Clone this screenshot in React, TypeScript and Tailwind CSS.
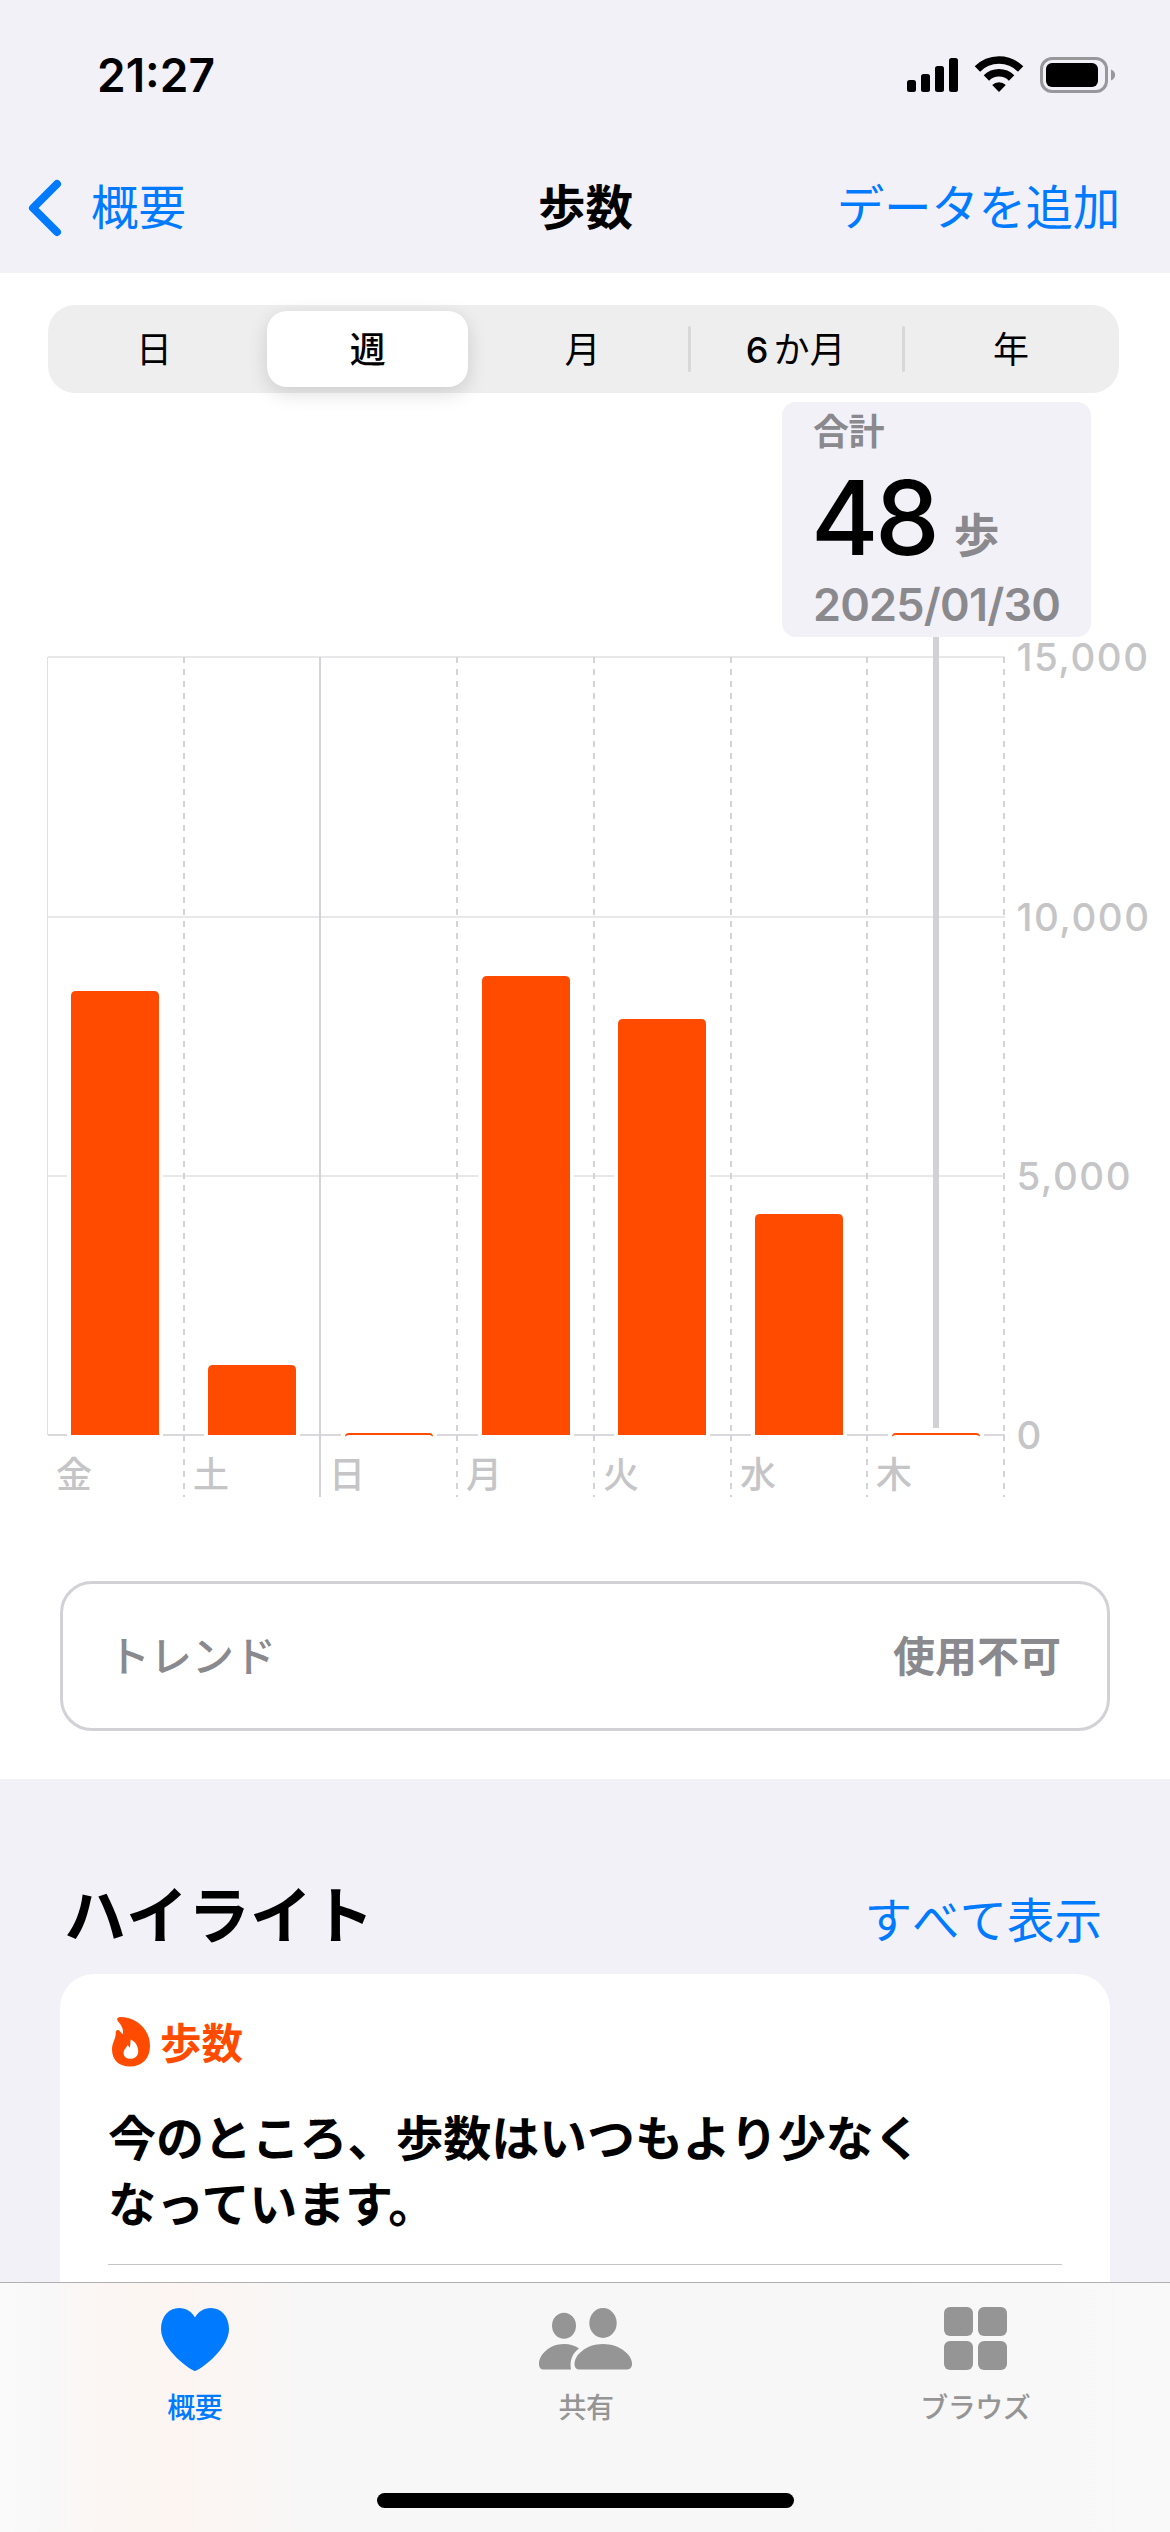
const ranges = ["日", "週", "月", "6か月", "年"];

const days = [
  { label: "金", lineX: 47, barX: 71, top: 598 },
  { label: "土", lineX: 184, barX: 208, top: 972 },
  { label: "日", lineX: 320, barX: 345, top: 1040 },
  { label: "月", lineX: 457, barX: 482, top: 583 },
  { label: "火", lineX: 594, barX: 618, top: 626 },
  { label: "水", lineX: 731, barX: 755, top: 821 },
  { label: "木", lineX: 867, barX: 892, top: 1040 },
];

const dashedLines = [184, 457, 594, 731, 867, 1004];

const yAxis = [
  { label: "15,000", y: 264 },
  { label: "10,000", y: 524 },
  { label: "5,000", y: 783 },
  { label: "0", y: 1042 },
];

const BASE_Y = 1042;

function StatusBar() {
  return (
    <div className="flex h-[149px] items-center justify-between pl-[97px] pr-[54px]">
      <span className="text-[46px] font-semibold leading-none">21:27</span>
      <svg width="209" height="38" viewBox="0 0 209 38" className="mt-px" aria-hidden="true">
        <rect x="0" y="24" width="9" height="12" rx="2.5" />
        <rect x="14" y="18" width="9" height="18" rx="2.5" />
        <rect x="28" y="10" width="9" height="26" rx="2.5" />
        <rect x="42" y="2" width="9" height="34" rx="2.5" />
        <g fill="none" stroke="#000" strokeWidth="7.6">
          <path d="M70.4 13 A30.5 30.5 0 0 1 113.6 13" />
          <path d="M79.4 22 A17.8 17.8 0 0 1 104.6 22" />
        </g>
        <path d="M92 36 L85.2 29 A9.7 9.7 0 0 1 98.8 29 Z" />
        <rect x="134.5" y="2.5" width="65" height="33" rx="10.5" fill="none" stroke="#98979b" strokeWidth="3" />
        <rect x="139" y="7" width="52" height="24" rx="6" />
        <path d="M204 13.5 C209.5 15.5 209.5 22.5 204 24.5 Z" fill="#98979b" />
      </svg>
    </div>
  );
}

function NavBar() {
  return (
    <div className="grid h-[116px] grid-cols-3 items-center pl-7 pr-[50px] pt-px text-[47.5px] leading-none text-[#007aff]">
      <div className="flex items-center">
        <svg width="34" height="58" viewBox="0 0 34 58" fill="none" className="mr-[29px]" aria-hidden="true">
          <path d="M29 5 L5 29 L29 53" stroke="#007aff" strokeWidth="8" strokeLinecap="round" strokeLinejoin="round" />
        </svg>
        <span>概要</span>
      </div>
      <h1 className="pl-[23px] text-center font-bold text-black">歩数</h1>
      <span className="whitespace-nowrap text-right tracking-[-0.3px]">データを追加</span>
    </div>
  );
}

function RangeControl() {
  return (
    <div className="ml-12 mr-[51px] flex h-[88px] rounded-[27px] bg-[#eeeeee] text-[36px] leading-none">
      {ranges.map((range, i) => (
        <div
          key={range}
          className={
            i > 2
              ? "relative flex flex-1 items-center justify-center before:absolute before:left-[-3px] before:top-[21px] before:h-[46px] before:w-[3px] before:rounded-full before:bg-[#d8d8da]"
              : "flex flex-1 items-center justify-center"
          }
        >
          {i === 1 ? (
            <span className="mr-[3px] flex h-[76px] w-[201px] items-center justify-center rounded-[20px] bg-white pt-[2px] font-medium shadow-[0_6px_20px_rgba(0,0,0,0.14)]">
              {range}
            </span>
          ) : range === "6か月" ? (
            <span className="mr-1 flex items-center gap-[5px] pt-[2px]">
              <span className="font-medium">6</span>
              <span>か月</span>
            </span>
          ) : (
            <span className="mr-[2px] pt-[2px]">{range}</span>
          )}
        </div>
      ))}
    </div>
  );
}

function StepsChart() {
  return (
    <div className="relative h-[1188px]">
      <svg width="1170" height="1188" viewBox="0 0 1170 1188" role="img" aria-label="歩数">
        {yAxis.map(({ label, y }) => (
          <g key={label}>
            <rect x="48" y={y - 1} width="957" height="2" fill={y === BASE_Y ? "#d9d9dd" : "#e8e8ea"} />
            <text x="1016.5" y={y + 14} fontSize="38.5" fontWeight="500" letterSpacing="1.5" fill="#c5c5c7">
              {label}
            </text>
          </g>
        ))}
        <rect x="47" y="264" width="1" height="778" fill="#e0e0e3" />
        {/* The week starts on the solid line */}
        <line x1="320" x2="320" y1="264" y2="1104" stroke="#d3d3d8" strokeWidth="2" />
        {dashedLines.map((x) => (
          <path
            key={x}
            d={`M${x} 264 V${BASE_Y} M${x} ${BASE_Y} V1104`}
            stroke="#d3d3d8"
            strokeWidth="2"
            strokeDasharray="6 6"
          />
        ))}
        {days.map(({ label, lineX, barX, top }) => (
          <g key={label}>
            <rect x={barX - 4} y={top - 3} width="96" height={BASE_Y + 4 - top} fill="#fff" />
            {BASE_Y - top > 4 ? (
              <path d={`M${barX} ${BASE_Y} V${top + 5} q0 -5 5 -5 h78 q5 0 5 5 V${BASE_Y} Z`} fill="#ff4b00" />
            ) : (
              <path d={`M${barX} ${top + 3.5} q0 -3.5 4 -3.5 h80 q4 0 4 3.5 l-3 -1.5 h-82 Z`} fill="#ff4b00" />
            )}
            <text x={lineX + 9} y="1095" fontSize="36" fontWeight="500" fill="#c5c5c7">
              {label}
            </text>
          </g>
        ))}
        <rect x="933" y="244" width="6" height="791" fill="#d1d1d6" />
      </svg>

      {/* Selected day */}
      <div className="absolute left-[782px] top-[9px] h-[235px] w-[309px] rounded-[14px] bg-[#f2f1f7] pl-[31px] text-[#8a898e]">
        <p className="pt-3 text-[36px] font-bold leading-[36px] tracking-[-0.5px]">合計</p>
        <div className="-ml-[2px] mt-[9px] flex h-[116px] items-center">
          <span className="text-[103px] font-medium leading-none tracking-[-3.5px] text-black">48</span>
          <span className="ml-[17px] mt-[36px] text-[46px] font-bold leading-none">歩</span>
        </div>
        <p className="mt-[7px] text-[45px] font-semibold leading-[46px] tracking-[-0.8px]">2025/01/30</p>
      </div>
    </div>
  );
}

function TrendRow() {
  return (
    <div className="mx-[60px] flex h-[150px] items-center justify-between rounded-[32px] border-[3px] border-[#d1d1d6] pl-[45px] pr-[46px] pt-[2px] text-[42px] leading-none text-[#8a898e]">
      <span className="font-medium">トレンド</span>
      <span className="font-bold">使用不可</span>
    </div>
  );
}

function Highlights() {
  return (
    <section className="h-[503px] overflow-hidden px-[60px]">
      <div className="flex h-[195px] items-end justify-between pl-1 pr-[8px] [font-kerning:none]">
        <h2 className="mb-[17px] text-[62px] font-bold leading-[80px]">ハイライト</h2>
        <span className="mb-[23px] text-[47.5px] leading-[60px] text-[#007aff]">すべて表示</span>
      </div>
      <div className="h-[400px] rounded-[34px] bg-white px-12 pt-[38px]">
        <div className="flex h-[60px] items-center pl-1 text-[#ff4b00]">
          <svg width="38" height="50" viewBox="0 0 38 50" fill="currentColor" className="mr-[10px]" aria-hidden="true">
            <path
              fillRule="evenodd"
              d="M5.2 1.8 C5.8 0.4 7.5 0 9.8 0 C25 1 38 12.5 38 29 C38 41.5 30 49.5 18 49.5 C7 49.5 0 43 0 32.5 C0 25.5 4.2 22 3.7 15.5 C3.6 13.2 5.6 12.3 7 13.3 C8 14 8.5 15.5 10.8 17.2 C11.6 13 10.5 9 5.8 4 C5.2 3.3 5 2.5 5.2 1.8 Z M18.7 22.4 C18.2 25 18.9 27.5 17.3 31 C17 29.5 16.5 28.5 15.3 28 C14.8 31 11.6 32 11.6 36 C11.6 39.8 14.5 41.8 18.5 41.8 C23 41.8 26.2 39 26.2 34.5 C26.2 29 23.5 24.5 18.7 22.4 Z"
            />
          </svg>
          <span className="mt-[6px] text-[41.5px] font-bold leading-none">歩数</span>
        </div>
        <p className="mt-[34px] text-[48px] font-bold leading-[66px] tracking-[-0.1px]">
          今のところ、歩数はいつもより少なく
          <br />
          なっています。
        </p>
        <div className="mt-[26px] h-px bg-[#c6c6c8]" />
      </div>
    </section>
  );
}

function HeartIcon() {
  return (
    <svg width="68" height="64" viewBox="0 0 68 64" fill="currentColor" aria-hidden="true">
      <path d="M34 64 C31 64 0 43 0 22 C0 9.5 8 1 18 1 C25.5 1 31 5 34 10.5 C37 5 42.5 1 50 1 C60 1 68 9.5 68 22 C68 43 37 64 34 64 Z" />
    </svg>
  );
}

function PeopleIcon() {
  return (
    <svg width="93" height="64" viewBox="0 -1 93 64" fill="currentColor" aria-hidden="true">
      <ellipse cx="25" cy="17.7" rx="12" ry="13" />
      <ellipse cx="64" cy="15" rx="13.7" ry="15" />
      <path d="M5 61.5 C1.5 61.5 0 59.5 0 56 C0 47 10 36 25 36 C31 36 36 37.5 40 40.5 C33 45.5 30.5 53 32 61.5 Z" />
      <path d="M41 61.5 C37 61.5 35.5 59.5 35.5 56 C35.5 47 47 36 64 36 C81 36 93 47 93 56 C93 59.5 91 61.5 87 61.5 Z" />
    </svg>
  );
}

function GridIcon() {
  return (
    <svg width="63" height="64" viewBox="0 0 63 64" fill="currentColor" aria-hidden="true">
      <rect width="29" height="29" rx="6" />
      <rect x="34" width="29" height="29" rx="6" />
      <rect y="34" width="29" height="29" rx="6" />
      <rect x="34" y="34" width="29" height="29" rx="6" />
    </svg>
  );
}

const tabs = [
  { name: "概要", icon: HeartIcon, active: true },
  { name: "共有", icon: PeopleIcon, active: false },
  { name: "ブラウズ", icon: GridIcon, active: false },
];

function TabBar() {
  return (
    <nav className="flex h-[250px] flex-col items-center border-t border-[#b0b0b3] bg-[linear-gradient(90deg,#fafafa_0px,#f9f8f8_50px,#fbf6f3_110px,#fcf5f2_180px,#faf6f4_240px,#f7f7f7_310px,#f7f7f7_900px,#f9f9f9_1170px)]">
      <ul className="flex h-[210px] w-full pt-6">
        {tabs.map((tab) => (
          <li
            key={tab.name}
            className={
              tab.active
                ? "flex flex-1 flex-col items-center pr-[2px] text-[#007aff]"
                : "flex flex-1 flex-col items-center text-[#959595]"
            }
          >
            <tab.icon />
            <span className="mt-[22px] text-[28px] font-medium leading-[30px] tracking-[-0.5px]">{tab.name}</span>
          </li>
        ))}
      </ul>
      <div className="h-[15px] w-[417px] rounded-full bg-black" />
    </nav>
  );
}

export default function App() {
  return (
    <div className="flex h-[2532px] w-[1170px] flex-col overflow-hidden bg-[#f2f1f7] font-['Inter','Noto_Sans_CJK_JP',sans-serif] text-black">
      <header className="h-[273px]">
        <StatusBar />
        <NavBar />
      </header>
      <main className="h-[1506px] bg-white pt-8">
        <RangeControl />
        <StepsChart />
        <TrendRow />
      </main>
      <Highlights />
      <TabBar />
    </div>
  );
}
